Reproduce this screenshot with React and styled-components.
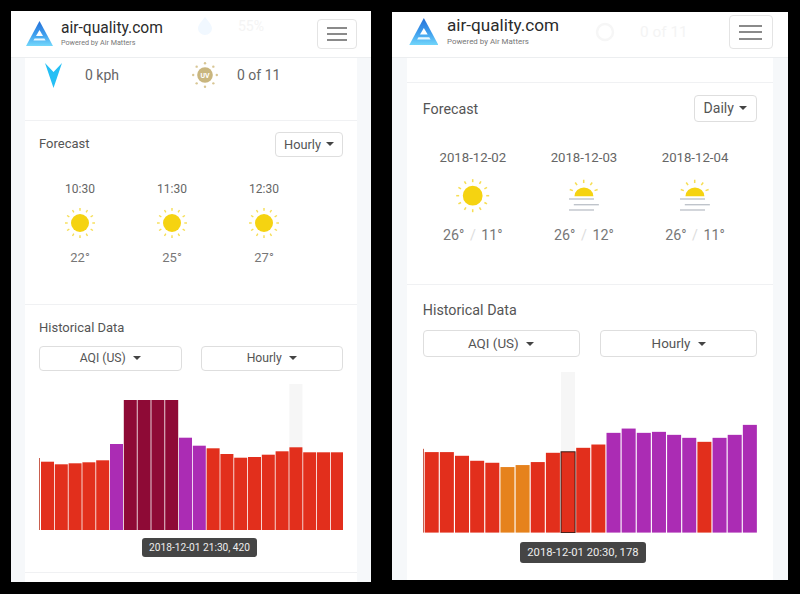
import React from "react";
import styled, { createGlobalStyle } from "styled-components";

const u = (n) => `calc(var(--u) * ${n})`;

const Global = createGlobalStyle`
  html, body { margin: 0; padding: 0; background: #000; }
  body { font-family: Roboto, "Liberation Sans", sans-serif; }
`;

const Page = styled.div`
  width: 800px;
  height: 594px;
  overflow: hidden;
  background: #000;
  display: flex;
  align-items: flex-start;
  gap: 21px;
  padding-left: 11px;
  box-sizing: border-box;
`;

const Phone = styled.div`
  --u: ${(p) => p.$scale}px;
  --icon-extra: ${(p) => p.$iconExtra}px;
  width: ${(p) => p.$w}px;
  height: ${(p) => p.$h}px;
  margin-top: ${(p) => p.$top}px;
  background: #f6f8fa;
  overflow: hidden;
  flex: none;
  display: flex;
  flex-direction: column;
`;

const Header = styled.header`
  position: relative;
  height: ${(p) => p.$h}px;
  flex: none;
  background: #fff;
  border-bottom: 1px solid #eceef0;
  box-sizing: border-box;
  display: flex;
  align-items: flex-end;
  justify-content: space-between;
  padding: 0 ${u(14)} 8px ${u(15)};
`;

const Brand = styled.div`
  display: flex;
  align-items: center;
  gap: ${u(8)};
  margin-bottom: 2px;
`;

const BrandText = styled.div`
  display: flex;
  flex-direction: column;
  gap: ${u(1)};
`;

const Title = styled.div`
  font-size: ${u(15.6)};
  line-height: ${u(18)};
  color: #2b2b2b;
`;

const Sub = styled.div`
  font-size: ${u(7.2)};
  line-height: ${u(9)};
  color: #777;
`;

const Burger = styled.div`
  width: ${u(40)};
  height: ${u(30.5)};
  border: 1px solid #e4e4e4;
  border-radius: 4px;
  box-sizing: border-box;
  display: flex;
  flex-direction: column;
  align-items: center;
  justify-content: center;
  gap: ${u(4)};
  background: #fff;
`;

const BurgerLine = styled.span`
  display: block;
  width: ${u(20.5)};
  height: 2px;
  background: #8a8a8a;
`;

const Ghost = styled.div`
  position: absolute;
  left: ${(p) => p.$left}px;
  top: ${(p) => p.$top}px;
  display: flex;
  align-items: center;
  gap: ${(p) => p.$gap}px;
  color: #f4f4f4;
  font-size: ${u(14)};
`;

const Card = styled.main`
  flex: 1;
  margin: 0 ${u(14)};
  background: #fff;
  display: flex;
  flex-direction: column;
  min-height: 0;
`;

const WindRow = styled.section`
  height: ${(p) => p.$h}px;
  flex: none;
  display: flex;
  align-items: flex-start;
  color: #666;
  font-size: ${u(14)};
`;

const Metric = styled.div`
  width: ${(p) => p.$w}px;
  display: flex;
  align-items: center;
  gap: ${(p) => p.$gap}px;
  padding-left: ${(p) => p.$pad}px;
  box-sizing: border-box;
  height: 34px;
`;

const Section = styled.section`
  flex: none;
  height: ${(p) => u(p.$h)};
  border-top: 1px solid #f0f1f3;
  padding: 0 ${u(14)};
  box-sizing: border-box;
`;

const Head = styled.div`
  display: flex;
  justify-content: space-between;
  align-items: flex-start;
  padding-top: ${u(10.5)};
`;

const SectionTitle = styled.h2`
  margin: ${(p) => p.$nudge || 0}px 0 0;
  padding-top: ${u(4)};
  font-size: ${u(13)};
  line-height: ${u(15)};
  font-weight: 400;
  color: #555;
`;

const Select = styled.div`
  height: ${u(25)};
  padding: 0 ${u(8)};
  border: 1px solid #dedede;
  border-radius: 4px;
  box-sizing: border-box;
  display: flex;
  align-items: center;
  justify-content: center;
  gap: ${u(5)};
  font-size: ${u(12.8)};
  color: #555;
  background: #fff;
`;

const Caret = styled.span`
  width: 0;
  height: 0;
  border-left: ${u(4)} solid transparent;
  border-right: ${u(4)} solid transparent;
  border-top: ${u(4)} solid #444;
`;

const Forecasts = styled.div`
  display: flex;
  margin: ${u(25)} 0 0 ${u(-5)};
`;

const ForecastItem = styled.div`
  width: ${(p) => u(p.$w)};
  display: flex;
  flex-direction: column;
  align-items: center;
`;

const When = styled.div`
  font-size: ${u(12)};
  line-height: ${u(14)};
  color: #666;
`;

const WeatherIcon = styled.svg`
  width: ${u(34)};
  height: ${u(34)};
  margin: calc(var(--u) * 10 + var(--icon-extra)) 0 calc(var(--u) * 10 + var(--icon-extra));
  display: block;
`;

const Temp = styled.div`
  font-size: ${u(13)};
  line-height: ${u(15)};
  color: #777;
  display: flex;
  gap: ${u(5)};
`;

const Slash = styled.span`
  color: #ddd;
`;

const HistoryTitle = styled(SectionTitle)`
  padding-top: ${u(15)};
`;

const Selects = styled.div`
  display: grid;
  grid-template-columns: 1fr 1fr;
  gap: ${u(19)};
  margin-top: ${u(11)};
`;

const Wide = styled(Select)`
  height: ${u(24.5)};
  font-size: ${u(12.2)};
  gap: ${u(7)};
`;

const ChartBox = styled.div`
  position: relative;
  margin-top: ${u(13.5)};
`;

const ChartSvg = styled.svg`
  display: block;
  width: 100%;
  height: ${u(146)};
`;

const Tooltip = styled.div`
  position: absolute;
  left: ${(p) => u(p.$left)};
  top: ${u(154)};
  height: ${u(19)};
  padding: 0 ${u(7)};
  background: #454545;
  color: #eee;
  border-radius: 3px;
  font-size: ${u(10.2)};
  display: flex;
  align-items: center;
  white-space: nowrap;
`;

const RED = "#e22f1c", PURPLE = "#ab2cb4", DARK = "#8e0a36", ORANGE = "#e6821c";

const leftBars = [
  [68.3, RED], [65.7, RED], [66.7, RED], [67.7, RED], [69.7, RED], [86, PURPLE],
  [130, DARK], [130, DARK], [130, DARK], [130, DARK], [92.3, PURPLE], [84.3, PURPLE],
  [81.7, RED], [76, RED], [72.3, RED], [73, RED], [75.3, RED], [78.7, RED],
  [82.7, RED], [77.7, RED], [77.7, RED], [77.7, RED],
];
const rightBars = [
  [80.7, RED], [80.7, RED], [77, RED], [72, RED], [70, RED], [65.7, ORANGE],
  [67.7, ORANGE], [70.7, RED], [80, RED], [81, RED], [85, RED], [88.3, RED],
  [100, PURPLE], [104.3, PURPLE], [100, PURPLE], [101, PURPLE], [98, PURPLE], [95, PURPLE],
  [91, RED], [95, PURPLE], [98, PURPLE], [108, PURPLE],
];

function Chart({ w, h, bars, x0, step, bw, sliver, active, outlined }) {
  return (
    <ChartSvg viewBox={`0 0 ${w} ${h}`} preserveAspectRatio="none">
      <rect x={x0 + active * step} y={0} width={bw} height={h} fill="#f6f6f6" />
      <rect x={0} y={h - sliver} width={1} height={sliver} fill="#c9604f" />
      {bars.map(([bh, color], i) => (
        <rect
          key={i}
          x={x0 + i * step}
          y={h - bh}
          width={bw}
          height={bh}
          fill={color}
          stroke={outlined && i === active ? "#3a1a14" : "none"}
          strokeWidth="1"
        />
      ))}
    </ChartSvg>
  );
}

function Logo({ id }) {
  return (
    <svg style={{ width: "calc(var(--u) * 27)", height: "calc(var(--u) * 25)" }} viewBox="0 0 27 25">
      <defs>
        <linearGradient id={id} x1="0" y1="0" x2="0" y2="1">
          <stop offset="0" stopColor="#2470d8" />
          <stop offset="0.55" stopColor="#3f9fee" />
          <stop offset="1" stopColor="#74d8fb" />
        </linearGradient>
      </defs>
      <polygon points="13.5,0 27,25 0,25" fill={`url(#${id})`} />
      <polygon points="13.5,9 17,15 10,15" fill="#fff" />
      <polygon points="8.6,17.5 18.4,17.5 19.6,19.6 7.4,19.6" fill="#e8f7ff" />
    </svg>
  );
}

function Rays({ cy = 17, r1 = 12.3, r2 = 15, from = 0, count = 12, step = 30 }) {
  const items = [];
  for (let i = 0; i < count; i++) {
    const t = ((from + i * step) * Math.PI) / 180;
    items.push(
      <line
        key={i}
        x1={17 + r1 * Math.cos(t)}
        y1={cy + r1 * Math.sin(t)}
        x2={17 + r2 * Math.cos(t)}
        y2={cy + r2 * Math.sin(t)}
        stroke="#f6de55"
        strokeWidth="1.4"
      />
    );
  }
  return items;
}

function Sun() {
  return (
    <WeatherIcon viewBox="0 0 34 34">
      <Rays />
      <circle cx="17" cy="17" r="9" fill="#f5d311" />
    </WeatherIcon>
  );
}

function FogSun() {
  return (
    <WeatherIcon viewBox="0 0 34 34">
      <Rays cy={16} r1={10.5} r2={13.5} from={-160} count={5} step={35} />
      <path d="M8.6 17.5 A8.6 8 0 0 1 25.8 17.5 Z" fill="#f5d311" />
      <line x1="3.6" y1="20" x2="26.4" y2="20" stroke="#bcc1c8" strokeWidth="1.2" />
      <line x1="8" y1="25.2" x2="30.8" y2="25.2" stroke="#bcc1c8" strokeWidth="1.2" />
      <line x1="3.6" y1="30" x2="26.4" y2="30" stroke="#bcc1c8" strokeWidth="1.2" />
    </WeatherIcon>
  );
}

function UvIcon() {
  const dots = [];
  for (let a = 0; a < 360; a += 45) {
    const t = (a * Math.PI) / 180;
    dots.push(<circle key={a} cx={13 + 11.8 * Math.cos(t)} cy={13 + 11.8 * Math.sin(t)} r="1.2" fill="#d8c694" />);
  }
  return (
    <svg width="26" height="26" viewBox="0 0 26 26">
      {dots}
      <circle cx="13" cy="13" r="7.8" fill="#c9b67f" />
      <text x="13" y="15.5" textAnchor="middle" fontSize="7" fontWeight="700" fill="#fff" fontFamily="Roboto">UV</text>
    </svg>
  );
}

function GhostDrop() {
  return (
    <svg width="16" height="18" viewBox="0 0 16 18">
      <path d="M8 0 C12 5 15 8 15 11.5 A7 6.5 0 0 1 1 11.5 C1 8 4 5 8 0Z" fill="#f1f8ff" />
    </svg>
  );
}

function GhostRing() {
  return (
    <svg width="20" height="20" viewBox="0 0 20 20">
      <circle cx="10" cy="10" r="8" fill="none" stroke="#f6f6f6" strokeWidth="2.5" />
    </svg>
  );
}

function PageHeader({ id, h, icon, ghostTop, ghostLeft, ghostGap, ghostText }) {
  return (
    <Header $h={h}>
      <Ghost $left={ghostLeft} $top={ghostTop} $gap={ghostGap}>
        {icon}
        <span>{ghostText}</span>
      </Ghost>
      <Brand>
        <Logo id={id} />
        <BrandText>
          <Title>air-quality.com</Title>
          <Sub>Powered by Air Matters</Sub>
        </BrandText>
      </Brand>
      <Burger>
        <BurgerLine />
        <BurgerLine />
        <BurgerLine />
      </Burger>
    </Header>
  );
}

export default function App() {
  return (
    <>
      <Global />
      <Page>
        <Phone $scale={1} $iconExtra={0} $w={360} $h={571} $top={11}>
          <PageHeader id="lgA" h={47} icon={<GhostDrop />} ghostTop={6} ghostLeft={186} ghostGap={25} ghostText="55%" />
          <Card>
            <WindRow $h={62}>
              <Metric $w={152} $gap={23} $pad={20}>
                <svg width="17" height="25" viewBox="0 0 17 25">
                  <polygon points="0,0 8.5,9 17,0 8.5,25" fill="#25bff5" />
                </svg>
                <span>0 kph</span>
              </Metric>
              <Metric $w={150} $gap={19} $pad={15}>
                <UvIcon />
                <span>0 of 11</span>
              </Metric>
            </WindRow>
            <Section $h={184}>
              <Head>
                <SectionTitle>Forecast</SectionTitle>
                <Select>Hourly<Caret /></Select>
              </Head>
              <Forecasts>
                <ForecastItem $w={92}><When>10:30</When><Sun /><Temp>22°</Temp></ForecastItem>
                <ForecastItem $w={92}><When>11:30</When><Sun /><Temp>25°</Temp></ForecastItem>
                <ForecastItem $w={92}><When>12:30</When><Sun /><Temp>27°</Temp></ForecastItem>
              </Forecasts>
            </Section>
            <Section $h={268}>
              <HistoryTitle>Historical Data</HistoryTitle>
              <Selects>
                <Wide>AQI (US)<Caret /></Wide>
                <Wide>Hourly<Caret /></Wide>
              </Selects>
              <ChartBox>
                <Chart w={304} h={146} bars={leftBars} x0={2} step={13.8} bw={13} sliver={72} active={18} />
                <Tooltip $left={103}>2018-12-01 21:30, 420</Tooltip>
              </ChartBox>
            </Section>
            <Section $h={20} />
          </Card>
        </Phone>
        <Phone $scale={1.1} $iconExtra={1.5} $w={396} $h={568} $top={12}>
          <PageHeader id="lgB" h={46} icon={<GhostRing />} ghostTop={10} ghostLeft={203} ghostGap={25} ghostText="0 of 11" />
          <Card>
            <WindRow $h={24} />
            <Section $h={184}>
              <Head>
                <SectionTitle $nudge={2}>Forecast</SectionTitle>
                <Select>Daily<Caret /></Select>
              </Head>
              <Forecasts>
                <ForecastItem $w={101}><When>2018-12-02</When><Sun /><Temp>26° <Slash>/</Slash> 11°</Temp></ForecastItem>
                <ForecastItem $w={101}><When>2018-12-03</When><FogSun /><Temp>26° <Slash>/</Slash> 12°</Temp></ForecastItem>
                <ForecastItem $w={101}><When>2018-12-04</When><FogSun /><Temp>26° <Slash>/</Slash> 11°</Temp></ForecastItem>
              </Forecasts>
            </Section>
            <Section $h={268}>
              <HistoryTitle>Historical Data</HistoryTitle>
              <Selects>
                <Wide>AQI (US)<Caret /></Wide>
                <Wide>Hourly<Caret /></Wide>
              </Selects>
              <ChartBox>
                <Chart w={334} h={161} bars={rightBars} x0={1.7} step={15.13} bw={14} sliver={84} active={9} outlined />
                <Tooltip $left={88}>2018-12-01 20:30, 178</Tooltip>
              </ChartBox>
            </Section>
          </Card>
        </Phone>
      </Page>
    </>
  );
}
